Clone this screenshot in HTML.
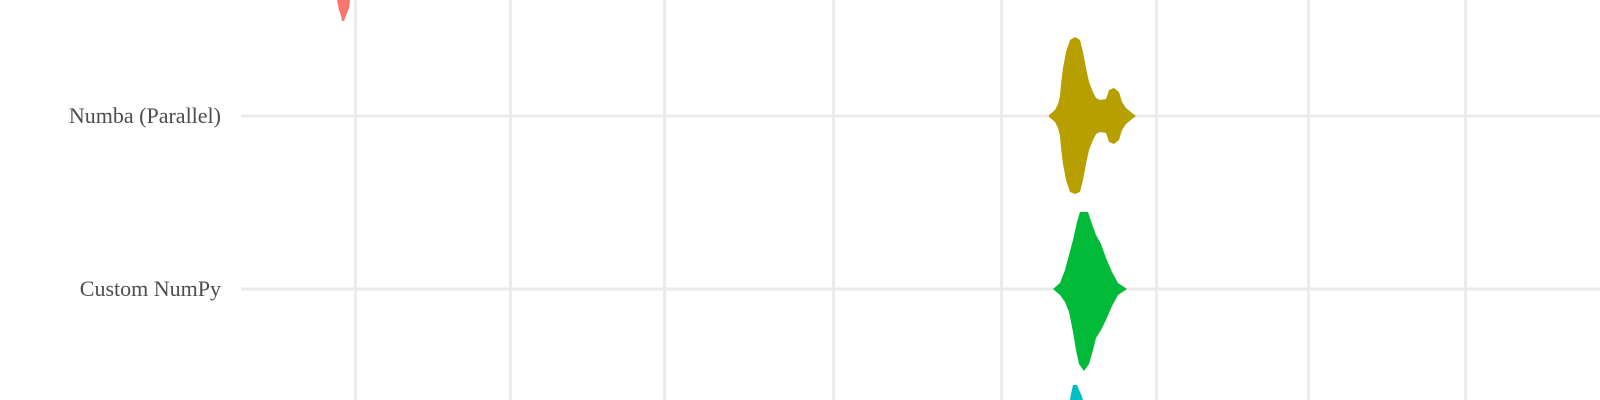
<!DOCTYPE html>
<html><head><meta charset="utf-8"><style>
html,body{margin:0;padding:0;background:#fff;width:1600px;height:400px;overflow:hidden}
.lbl{position:absolute;right:1379px;font-family:"Liberation Serif",serif;font-size:22px;color:#4d4d4d;white-space:nowrap;line-height:22px}
</style></head><body>
<svg width="1600" height="400" style="position:absolute;left:0;top:0">
<g stroke="#ebebeb" stroke-width="3">
<line x1="241" y1="116" x2="1600" y2="116"/>
<line x1="241" y1="289" x2="1600" y2="289"/>
<line x1="355.5" y1="0" x2="355.5" y2="400"/>
<line x1="510.5" y1="0" x2="510.5" y2="400"/>
<line x1="664.5" y1="0" x2="664.5" y2="400"/>
<line x1="833.5" y1="0" x2="833.5" y2="400"/>
<line x1="1001.5" y1="0" x2="1001.5" y2="400"/>
<line x1="1156.5" y1="0" x2="1156.5" y2="400"/>
<line x1="1308.5" y1="0" x2="1308.5" y2="400"/>
<line x1="1465.5" y1="0" x2="1465.5" y2="400"/>
</g>
<path fill="#F8766D" d="M337,0 L350,0 L349,8 L347,13 L345,18 L344,21 L342,21 L341,16 L339,10 Z"/>
<path fill="#B79F00" d="M1049,115 L1055,110 L1058,104 L1060,96 L1061,84 L1063,68 L1066,52 L1070,40 L1075,37 L1080,40 L1083,52 L1086,68 L1089,82 L1093,92 L1096,98 L1100,100 L1106,99 L1109,90 L1114,88 L1119,92 L1122,102 L1126,108 L1132,113 L1136,116 L1132,119 L1126,124 L1122,130 L1119,140 L1114,144 L1109,142 L1106,133 L1100,132 L1096,134 L1093,140 L1089,150 L1086,164 L1083,180 L1080,192 L1075,194 L1070,192 L1066,180 L1063,164 L1061,148 L1060,136 L1058,128 L1055,122 L1049,117 Z"/>
<path fill="#00BA38" d="M1053,289 L1060,283 L1065,270 L1069,255 L1073,240 L1077,222 L1080,212 L1088,212 L1092,224 L1096,235 L1101,244 L1106,258 L1112,272 L1118,283 L1127,289 L1118,295 L1112,306 L1106,320 L1101,330 L1096,338 L1093,350 L1089,364 L1084,371 L1079,364 L1076,350 L1073,332 L1069,312 L1065,302 L1060,295 Z"/>
<path fill="#00BFC4" d="M1073,385 L1077,385 L1079,390 L1081,394 L1083,400 L1070,400 L1071,394 Z"/>
</svg>
<div class="lbl" style="top:105px">Numba (Parallel)</div>
<div class="lbl" style="top:278px">Custom NumPy</div>
</body></html>
